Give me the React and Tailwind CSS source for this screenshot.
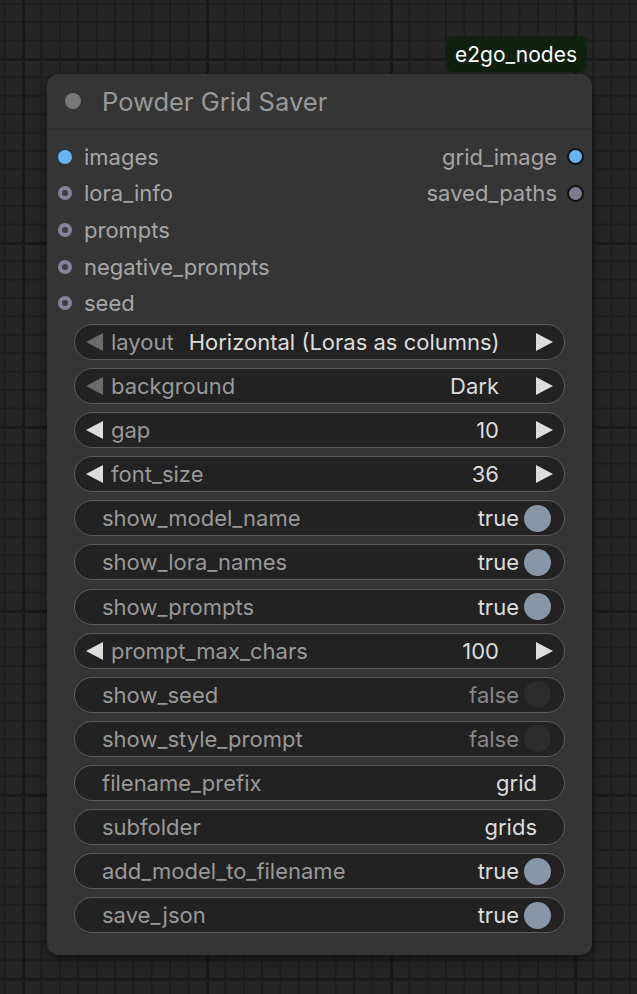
import React from "react";

const FONT = "font-['Inter','Noto_Sans',sans-serif]";

function LeftArrow({ dim }) {
  return (
    <svg width="17" height="18" viewBox="0 0 17 18" className="shrink-0">
      <polygon points="17,0 17,18 0,9" fill={dim ? "#6b6b6b" : "#dddddd"} />
    </svg>
  );
}
function RightArrow() {
  return (
    <svg width="17" height="18" viewBox="0 0 17 18" className="shrink-0">
      <polygon points="0,0 0,18 17,9" fill="#dddddd" />
    </svg>
  );
}

function Combo({ label, value, dim, left }) {
  return (
    <div className="h-[36px] rounded-full bg-[#222222] border-[1.5px] border-[#5c5c5c] flex items-center pl-[11px] pr-[11px]">
      <LeftArrow dim={dim} />
      <span className="ml-[8px] text-[#999999] whitespace-nowrap">{label}</span>
      {left ? (
        <span className="ml-[15px] text-[#dddddd] flex-1 whitespace-nowrap">{value}</span>
      ) : (
        <span className="flex-1 text-right text-[#dddddd] whitespace-nowrap pr-[19px]">{value}</span>
      )}
      <span className="w-[35px] flex justify-end shrink-0">
        <RightArrow />
      </span>
    </div>
  );
}

function Toggle({ label, on }) {
  return (
    <div className="h-[36px] rounded-full bg-[#222222] border-[1.5px] border-[#5c5c5c] flex items-center pl-[27px] pr-[13px]">
      <span className="text-[#999999] flex-1 whitespace-nowrap">{label}</span>
      <span className={on ? "text-[#dddddd]" : "text-[#888888]"}>{on ? "true" : "false"}</span>
      <span
        className={
          "ml-[5px] w-[27px] h-[27px] rounded-full shrink-0 " +
          (on ? "bg-[#8797a8]" : "bg-[#2c2c2c]")
        }
      />
    </div>
  );
}

function TextW({ label, value }) {
  return (
    <div className="h-[36px] rounded-full bg-[#222222] border-[1.5px] border-[#5c5c5c] flex items-center pl-[27px] pr-[27px]">
      <span className="text-[#999999] flex-1 whitespace-nowrap">{label}</span>
      <span className="text-[#dddddd]">{value}</span>
    </div>
  );
}

function InDot({ type }) {
  if (type === "image")
    return <span className="w-[14px] h-[14px] shrink-0 rounded-full bg-[#64b5f6]" />;
  return (
    <span className="w-[14px] h-[14px] shrink-0 rounded-full border-[4px] border-[#85829a] bg-[#3d3d3d]" />
  );
}

function OutDot({ color }) {
  return (
    <span className={"block w-[17px] h-[17px] shrink-0 rounded-full border-[2px] border-[#111111] " + color} />
  );
}

export default function App() {
  const inputs = [
    ["images", "image"],
    ["lora_info", "x"],
    ["prompts", "x"],
    ["negative_prompts", "x"],
    ["seed", "x"],
  ];
  const outputs = [
    ["grid_image", "bg-[#64b5f6]"],
    ["saved_paths", "bg-[#7e7b8c]"],
  ];
  return (
    <div
      className={
        "w-full h-[994px] overflow-hidden bg-[#252525] text-[22px] leading-none " +
        FONT +
        " [background-image:linear-gradient(#191919_3px,transparent_3px),linear-gradient(90deg,#191919_3px,transparent_3px),linear-gradient(#1d1d1d_2px,transparent_2px),linear-gradient(90deg,#1d1d1d_2px,transparent_2px)]" +
        " [background-size:184px_184px,184px_184px,18.4px_18.4px,18.4px_18.4px]" +
        " [background-position:0px_58px,22px_0px,0px_58px,22px_0px]"
      }
    >
      <div className="pt-[36px] pl-[47px] w-[592px] flex flex-col">
        <div className="self-end mr-[5px] h-[36px] px-[10px] rounded-[8px] bg-[#0f200f] text-white flex items-center text-[21px]">
          e2go_nodes
        </div>
        <div className="mt-[2px] w-[545px] rounded-[12px] bg-[#353535] shadow-[0_4px_12px_rgba(0,0,0,0.5)] flex flex-col">
          <div className="h-[56px] flex items-center pl-[18px] border-b-[2px] border-[#2e2e2e]">
            <span className="w-[16px] h-[16px] rounded-full bg-[#777777]" />
            <span className="ml-[21px] text-[25.5px] text-[#999999] pt-[2px]">Powder Grid Saver</span>
          </div>
          <div className="pt-[8.5px] flex">
            <div className="flex-1 flex flex-col">
              {inputs.map(([n, t]) => (
                <div key={n} className="h-[36.6px] flex items-center pl-[11px]">
                  <InDot type={t} />
                  <span className="ml-[12px] text-[#a6a6a6]">{n}</span>
                </div>
              ))}
            </div>
            <div className="flex flex-col items-end pr-[8px]">
              {outputs.map(([n, c]) => (
                <div key={n} className="h-[36.6px] flex items-center">
                  <span className="text-[#a6a6a6]">{n}</span>
                  <span className="ml-[10px]">
                    <OutDot color={c} />
                  </span>
                </div>
              ))}
            </div>
          </div>
          <div className="mt-[2.5px] px-[27px] pb-[22px] flex flex-col gap-[8.1px]">
            <Combo label="layout" value="Horizontal (Loras as columns)" dim left />
            <Combo label="background" value="Dark" dim />
            <Combo label="gap" value="10" />
            <Combo label="font_size" value="36" />
            <Toggle label="show_model_name" on />
            <Toggle label="show_lora_names" on />
            <Toggle label="show_prompts" on />
            <Combo label="prompt_max_chars" value="100" />
            <Toggle label="show_seed" on={false} />
            <Toggle label="show_style_prompt" on={false} />
            <TextW label="filename_prefix" value="grid" />
            <TextW label="subfolder" value="grids" />
            <Toggle label="add_model_to_filename" on />
            <Toggle label="save_json" on />
          </div>
        </div>
      </div>
    </div>
  );
}
